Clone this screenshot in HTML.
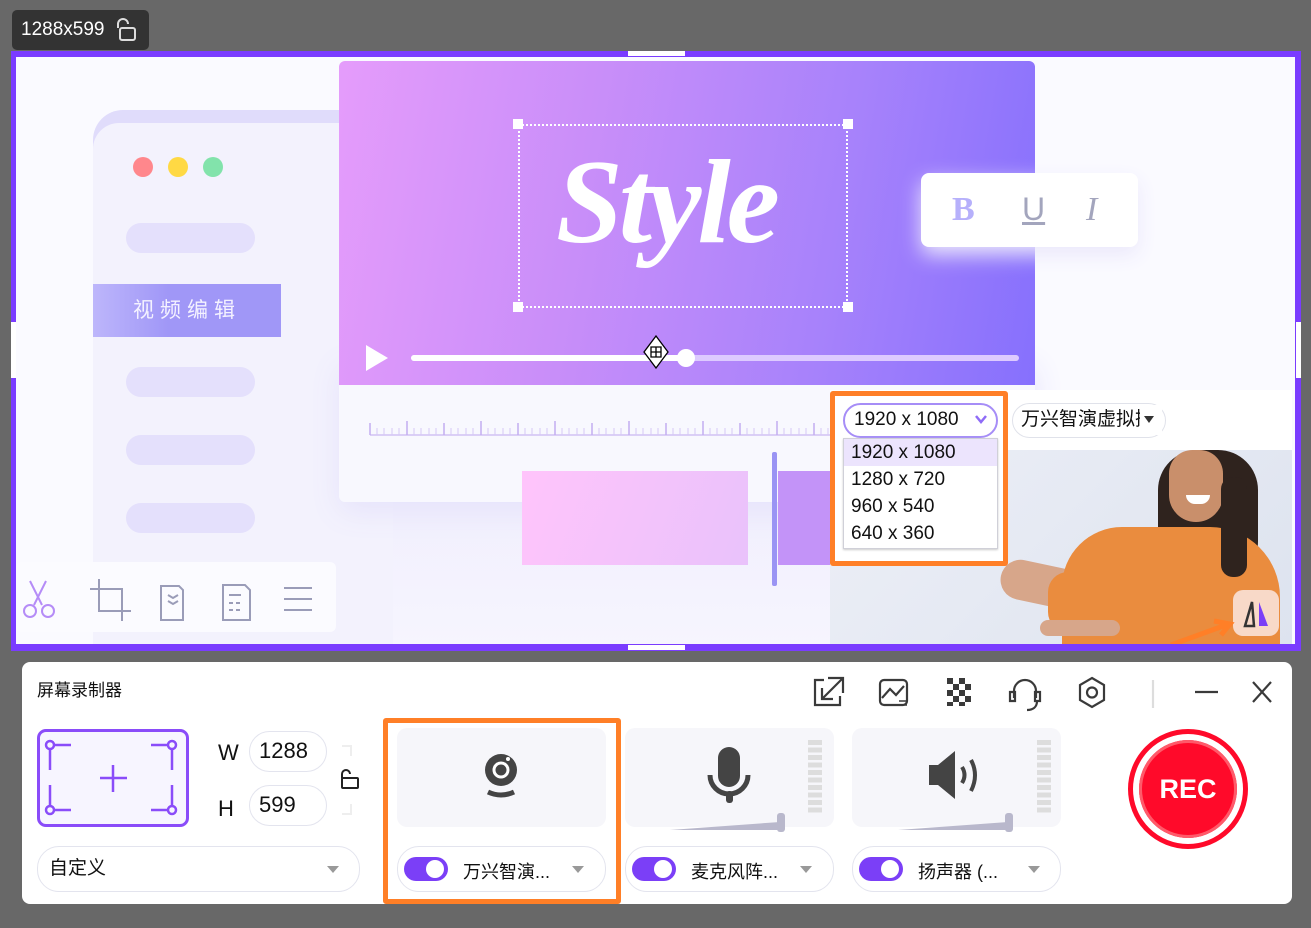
<!DOCTYPE html>
<html><head><meta charset="utf-8"><style>
*{margin:0;padding:0;box-sizing:border-box}
body{width:1311px;height:928px;background:#686868;position:relative;overflow:hidden;font-family:"Liberation Sans","Noto Sans CJK SC",sans-serif}
.a{position:absolute}
.pill{position:absolute;left:126px;width:129px;height:30px;border-radius:15px;background:#e4e0fc}
.sel{position:absolute;background:#fff;border:1.5px solid #e3e4ee;border-radius:22px}
.card{position:absolute;background:#f6f6fa;border-radius:10px}
.tog{position:absolute;width:44px;height:24px;border-radius:12px;background:#7b3ff7}
.tog:after{content:"";position:absolute;right:4px;top:3px;width:18px;height:18px;border-radius:50%;background:#fff}
.tri{position:absolute;width:0;height:0;border-left:6px solid transparent;border-right:6px solid transparent;border-top:7px solid #999}
</style></head><body>

<div class="a" style="left:12px;top:10px;width:137px;height:40px;background:#333;border-radius:5px;color:#fff;font-size:19px;line-height:40px;padding-left:9px">1288x599</div>
<svg class="a" style="left:113px;top:17px" width="26" height="26" viewBox="0 0 26 26"><path d="M5 11 V7 a5 5 0 0 1 10 0" fill="none" stroke="#ddd" stroke-width="2"/><rect x="7" y="11" width="15" height="12" rx="2" fill="none" stroke="#ddd" stroke-width="2"/></svg>

<div class="a" style="left:11px;top:51px;width:1290px;height:600px;background:#7a3cff"></div>
<div class="a" style="left:16px;top:57px;width:1279px;height:587px;background:#fafaff;overflow:hidden">
  <div class="a" style="left:323px;top:440px;width:500px;height:150px;background:linear-gradient(#f1effd,#f6f5fe)"></div>
  <div class="a" style="left:77px;top:53px;width:300px;height:560px;border-radius:30px 0 0 0;background:#e0dcfb"></div>
  <div class="a" style="left:77px;top:66px;width:300px;height:560px;border-radius:26px 0 0 0;background:#f3f2fd"></div>
  <div class="a" style="left:117px;top:100px;width:20px;height:20px;border-radius:50%;background:#ff878c"></div>
  <div class="a" style="left:152px;top:100px;width:20px;height:20px;border-radius:50%;background:#ffd944"></div>
  <div class="a" style="left:187px;top:100px;width:20px;height:20px;border-radius:50%;background:#82e3ab"></div>
  <div class="pill" style="left:110px;top:166px"></div>
  <div class="a" style="left:77px;top:227px;width:188px;height:53px;background:linear-gradient(90deg,#bdb6fb,#a097f7 40%);color:#f4f2ff;font-size:21px;line-height:53px;text-align:center;letter-spacing:6px">视频编辑</div>
  <div class="pill" style="left:110px;top:310px"></div>
  <div class="pill" style="left:110px;top:378px"></div>
  <div class="pill" style="left:110px;top:446px"></div>
  <div class="a" style="left:323px;top:300px;width:696px;height:145px;background:#f8f8fe;border-radius:0 0 6px 6px;box-shadow:0 10px 30px #e6e3fb"></div>
  <svg class="a" style="left:350px;top:360px" width="470" height="20">
  <line x1="4" y1="18" x2="470" y2="18" stroke="#c9b6f2" stroke-width="1.3"/>
  <path d="M4 18v-12M41 18v-14M78 18v-12M115 18v-14M152 18v-12M189 18v-14M226 18v-12M263 18v-14M300 18v-12M337 18v-14M374 18v-12M411 18v-14M448 18v-12" stroke="#c3aef0" stroke-width="1.5"/>
  <path d="M11 18v-7M18 18v-7M26 18v-7M33 18v-7M48 18v-7M55 18v-7M63 18v-7M70 18v-7M85 18v-7M92 18v-7M100 18v-7M107 18v-7M122 18v-7M129 18v-7M137 18v-7M144 18v-7M159 18v-7M166 18v-7M174 18v-7M181 18v-7M196 18v-7M203 18v-7M211 18v-7M218 18v-7M233 18v-7M240 18v-7M248 18v-7M255 18v-7M270 18v-7M277 18v-7M285 18v-7M292 18v-7M307 18v-7M314 18v-7M322 18v-7M329 18v-7M344 18v-7M351 18v-7M359 18v-7M366 18v-7M381 18v-7M388 18v-7M396 18v-7M403 18v-7M418 18v-7M425 18v-7M433 18v-7M440 18v-7M455 18v-7M462 18v-7" stroke="#d6c8f5" stroke-width="1"/></svg>
  <div class="a" style="left:506px;top:414px;width:226px;height:94px;background:linear-gradient(110deg,#ffc4fb,#e9c2fb);"></div>
  <div class="a" style="left:756px;top:395px;width:5px;height:134px;background:#9a94f4;border-radius:2px"></div>
  <div class="a" style="left:762px;top:414px;width:60px;height:94px;background:#c393f8"></div>
  <div class="a" style="left:323px;top:4px;width:696px;height:324px;border-radius:6px 6px 0 0;background:linear-gradient(100deg,#e59cfb 0%,#c98ef9 35%,#a782fb 70%,#8670fd 100%)"></div>
  <div class="a" style="left:502px;top:67px;width:330px;height:184px;border:2px dotted #fff"></div>
  <div class="a" style="left:497px;top:62px;width:10px;height:10px;background:#fff"></div>
  <div class="a" style="left:827px;top:62px;width:10px;height:10px;background:#fff"></div>
  <div class="a" style="left:497px;top:245px;width:10px;height:10px;background:#fff"></div>
  <div class="a" style="left:827px;top:245px;width:10px;height:10px;background:#fff"></div>
  <div class="a" style="left:540px;top:70px;color:#fff;font-family:'Liberation Serif',serif;font-style:italic;font-weight:bold;font-size:120px;line-height:150px;letter-spacing:-4px">Style</div>
  <div class="a" style="left:350px;top:288px;width:0;height:0;border-top:13px solid transparent;border-bottom:13px solid transparent;border-left:22px solid #fff"></div>
  <div class="a" style="left:395px;top:298px;width:608px;height:6px;border-radius:3px;background:#ddcaff"></div>
  <div class="a" style="left:395px;top:298px;width:275px;height:6px;border-radius:3px;background:#fff"></div>
  <div class="a" style="left:661px;top:292px;width:18px;height:18px;border-radius:50%;background:#fff"></div>
  <svg class="a" style="left:625px;top:278px" width="30" height="34"><path d="M15 1 L27 17 L15 33 L3 17 Z" fill="#fff" stroke="#000" stroke-width="1.3"/><path d="M10 12h10v10h-10zM15 12v10M10 17h10" fill="none" stroke="#000" stroke-width="1.3"/></svg>
  <div class="a" style="left:905px;top:116px;width:217px;height:74px;background:#fff;border-radius:8px;box-shadow:0 8px 20px #ebe8fb"></div>
  <div class="a" style="left:936px;top:134px;font-size:34px;font-weight:bold;color:#b6b0fb;font-family:'Liberation Serif',serif">B</div>
  <div class="a" style="left:1006px;top:134px;font-size:32px;color:#a3a5bd;text-decoration:underline">U</div>
  <div class="a" style="left:1070px;top:134px;font-size:34px;color:#a3a5bd;font-style:italic;font-family:'Liberation Serif',serif">I</div>
  <div class="a" style="left:0;top:505px;width:320px;height:70px;background:#fbfbff;border-radius:6px"></div>
  <svg class="a" style="left:6px;top:520px" width="300" height="45" fill="none" stroke-width="2">
   <g stroke="#b58cf7"><path d="M8 4 L20 28 M24 4 L12 28"/><circle cx="8" cy="34" r="6"/><circle cx="26" cy="34" r="6"/></g>
   <g stroke="#9a9cb8"><path d="M77 2v32h32M68 12h32v32"/><path d="M139 9h18l4 4v30h-22z"/><path d="M146 18l5 3 5-3M146 24l5 3 5-3"/><path d="M201 8h22l5 5v30h-27z M207 18h12M207 26h4M214 26h4M207 33h4M214 33h4"/><path d="M262 11h28M262 22h28M262 33h28"/></g>
  </svg>
  <!-- webcam region -->
  <div class="a" style="left:814px;top:333px;width:462px;height:254px;background:linear-gradient(135deg,#eef0f7,#dde3ef)"></div>
  <div class="a" style="left:814px;top:333px;width:462px;height:60px;background:#fff"></div>
  <!-- person -->
  <div class="a" style="left:1142px;top:393px;width:100px;height:122px;background:#2f231e;border-radius:40px 40px 30px 20px"></div>
  <div class="a" style="left:984px;top:508px;width:90px;height:40px;background:#d7a68a;border-radius:20px;transform:rotate(12deg)"></div>
  <div class="a" style="left:1046px;top:470px;width:218px;height:130px;background:#ea8c3e;border-radius:60px 70px 0 0"></div>
  <div class="a" style="left:1032px;top:515px;width:60px;height:60px;background:#ea8c3e;border-radius:20px"></div>
  <div class="a" style="left:1153px;top:393px;width:54px;height:72px;background:#c98f6b;border-radius:26px 26px 30px 30px"></div>
  <div class="a" style="left:1170px;top:438px;width:24px;height:9px;background:#fff;border-radius:0 0 12px 12px"></div>
  <div class="a" style="left:1205px;top:420px;width:26px;height:100px;background:#2f231e;border-radius:12px"></div>
  <div class="a" style="left:1024px;top:563px;width:80px;height:16px;background:#d7a68a;border-radius:8px"></div>
  <div class="a" style="left:1217px;top:533px;width:46px;height:46px;background:rgba(250,230,225,.85);border-radius:10px"></div>
  <svg class="a" style="left:1224px;top:540px" width="34" height="34"><path d="M12 5 L5 29 H14 Z" fill="none" stroke="#333" stroke-width="2.5"/><path d="M19 5 L28 29 H19 Z" fill="#7b3ff7"/></svg>
  <svg class="a" style="left:1150px;top:560px" width="80" height="30"><path d="M5 28 L60 8 M48 4 L64 7 L55 18" stroke="#ff7f27" stroke-width="5" fill="none"/></svg>
</div>
<div class="a" style="left:628px;top:51px;width:57px;height:5px;background:#fff"></div>
<div class="a" style="left:628px;top:645px;width:57px;height:5px;background:#fff"></div>
<div class="a" style="left:11px;top:322px;width:5px;height:56px;background:#fff"></div>
<div class="a" style="left:1296px;top:322px;width:5px;height:56px;background:#fff"></div>

<div class="a" style="left:830px;top:391px;width:178px;height:175px;border:5px solid #ff7f27;border-radius:3px;background:#fff"></div>
<div class="a" style="left:843px;top:403px;width:155px;height:35px;border:2.5px solid #a68df7;border-radius:18px;font-size:19px;line-height:30px;padding-left:9px;color:#111">1920 x 1080</div>
<svg class="a" style="left:975px;top:414px" width="12" height="10"><path d="M1 2 L6 8 L11 2" stroke="#8f6cf7" stroke-width="2.5" fill="none"/></svg>
<div class="a" style="left:843px;top:438px;width:155px;height:111px;border:1px solid #d0d0d8;background:#fff;font-size:19px;color:#111;box-shadow:0 1px 2px #ccc">
 <div style="height:27px;line-height:27px;padding-left:7px;background:#ece4fd">1920 x 1080</div>
 <div style="height:27px;line-height:27px;padding-left:7px">1280 x 720</div>
 <div style="height:27px;line-height:27px;padding-left:7px">960 x 540</div>
 <div style="height:27px;line-height:27px;padding-left:7px">640 x 360</div>
</div>
<div class="a" style="left:1012px;top:403px;width:154px;height:35px;border:1.5px solid #e0e2ea;border-radius:18px;font-size:19px;line-height:32px;padding-left:8px;color:#111;overflow:hidden;white-space:nowrap">万兴智演虚拟摄</div>
<div class="a" style="left:1140px;top:405px;width:22px;height:30px;background:#fff"></div>
<svg class="a" style="left:1143px;top:415px" width="12" height="10"><path d="M1 1 L6 8 L11 1 Z" fill="#333"/></svg>

<div class="a" style="left:22px;top:662px;width:1270px;height:242px;background:#fff;border-radius:8px"></div>
<div class="a" style="left:37px;top:676px;font-size:17px;color:#111">屏幕录制器</div>
<svg class="a" style="left:805px;top:672px" width="480" height="40" fill="none" stroke="#3a3a3a" stroke-width="2.2">
 <path d="M19 8 H10 V33 H35 V24 M23 6 H38 V21 M37 7 L18 26 M17 16 V27 H28"/>
 <rect x="75" y="8" width="27" height="25" rx="4"/><path d="M77 26 L85 17 L91 23 L99 14"/><path d="M94 29 h8 M94 33 h8" stroke-width="1.6"/>
 <g fill="#3a3a3a" stroke="none"><rect x="142" y="6" width="6" height="6"/><rect x="154" y="6" width="6" height="6"/><rect x="148" y="12" width="6" height="6"/><rect x="160" y="12" width="6" height="6"/><rect x="142" y="18" width="6" height="6"/><rect x="154" y="18" width="6" height="6"/><rect x="148" y="24" width="6" height="6"/><rect x="160" y="24" width="6" height="6"/><rect x="142" y="30" width="6" height="4"/><rect x="154" y="30" width="6" height="4"/></g>
 <path d="M209 26 V19 a11 11 0 0 1 22 0 V26 M205 20 h5 v9 h-5 z M230 20 h5 v9 h-5 z M232 29 c0 6 -4 9 -10 9"/>
 <path d="M287 6 L299 13 V28 L287 35 L275 28 V13 Z"/><circle cx="287" cy="20.5" r="5"/>
 <path d="M348 8 V36" stroke="#ddd"/>
 <path d="M390 20 H413"/><path d="M448 10 L466 30 M466 10 L448 30"/>
</svg>
<div class="a" style="left:37px;top:729px;width:152px;height:98px;border:3px solid #8a4cf9;border-radius:9px;background:#f7f5ff"></div>
<svg class="a" style="left:40px;top:732px" width="146" height="92" fill="none" stroke="#8a4cf9" stroke-width="2.5">
 <circle cx="10" cy="13" r="4"/><path d="M10 17 V38 M14 13 H31"/>
 <circle cx="132" cy="13" r="4"/><path d="M132 17 V38 M128 13 H111"/>
 <circle cx="10" cy="78" r="4"/><path d="M10 74 V53 M14 78 H31"/>
 <circle cx="132" cy="78" r="4"/><path d="M132 74 V53 M128 78 H111"/>
 <path d="M73 33 V60 M60 46 H87"/>
</svg>
<div class="a" style="left:218px;top:740px;font-size:22px;color:#111">W</div>
<div class="a" style="left:218px;top:796px;font-size:22px;color:#111">H</div>
<div class="sel" style="left:249px;top:731px;width:78px;height:41px;font-size:22px;line-height:38px;padding-left:9px;color:#111">1288</div>
<div class="sel" style="left:249px;top:785px;width:78px;height:41px;font-size:22px;line-height:38px;padding-left:9px;color:#111">599</div>
<svg class="a" style="left:335px;top:744px" width="30" height="72" fill="none"><path d="M7 2 h9 v10 M16 60 v10 h-9" stroke="#eee" stroke-width="2"/><path d="M7 34 V30 a4 4 0 0 1 8 0" stroke="#222" stroke-width="2"/><rect x="7" y="34" width="16" height="10" rx="1" stroke="#222" stroke-width="2"/></svg>
<div class="sel" style="left:37px;top:846px;width:323px;height:46px;font-size:19px;line-height:43px;padding-left:11px;color:#111">自定义</div>
<div class="tri" style="left:327px;top:866px"></div>

<div class="a" style="left:383px;top:718px;width:238px;height:186px;border:5px solid #ff7f27;border-radius:3px"></div>
<div class="card" style="left:397px;top:728px;width:209px;height:99px"></div>
<svg class="a" style="left:478px;top:748px" width="46" height="56"><circle cx="23" cy="22" r="16" fill="#444"/><circle cx="23" cy="22" r="7" fill="none" stroke="#fff" stroke-width="3"/><circle cx="30" cy="11" r="2" fill="#fff"/><path d="M10 44 Q23 50 36 44" stroke="#444" stroke-width="5" fill="none"/></svg>
<div class="sel" style="left:397px;top:846px;width:209px;height:46px"></div>
<div class="tog" style="left:404px;top:857px"></div>
<div class="a" style="left:463px;top:858px;font-size:18px;color:#111">万兴智演...</div>
<div class="tri" style="left:572px;top:866px"></div>

<div class="card" style="left:625px;top:728px;width:209px;height:99px"></div>
<svg class="a" style="left:700px;top:745px" width="60" height="80"><rect x="18" y="2" width="22" height="40" rx="11" fill="#444"/><path d="M10 30 a19 19 0 0 0 38 0" stroke="#444" stroke-width="5" fill="none"/><rect x="26" y="46" width="7" height="12" rx="3" fill="#444"/></svg>
<div class="a" style="left:808px;top:740px;width:14px;height:73px;background:repeating-linear-gradient(#ddd 0 5px,transparent 5px 7.5px)"></div>
<svg class="a" style="left:660px;top:810px" width="130" height="24"><path d="M10 20 L120 12 V20 Z" fill="#b9b8cc"/><rect x="117" y="3" width="8" height="19" rx="3" fill="#b9b8cc"/></svg>
<div class="sel" style="left:625px;top:846px;width:209px;height:46px"></div>
<div class="tog" style="left:632px;top:857px"></div>
<div class="a" style="left:691px;top:858px;font-size:18px;color:#111">麦克风阵...</div>
<div class="tri" style="left:800px;top:866px"></div>

<div class="card" style="left:852px;top:728px;width:209px;height:99px"></div>
<svg class="a" style="left:925px;top:748px" width="60" height="56"><path d="M4 17 H13 L30 3 V51 L13 37 H4 Z" fill="#444"/><path d="M37 19 Q42 27 37 35" stroke="#444" stroke-width="4" fill="none"/><path d="M46 12 Q54 27 46 43" stroke="#444" stroke-width="4" fill="none"/></svg>
<div class="a" style="left:1037px;top:740px;width:14px;height:73px;background:repeating-linear-gradient(#ddd 0 5px,transparent 5px 7.5px)"></div>
<svg class="a" style="left:888px;top:810px" width="130" height="24"><path d="M10 20 L120 12 V20 Z" fill="#b9b8cc"/><rect x="117" y="3" width="8" height="19" rx="3" fill="#b9b8cc"/></svg>
<div class="sel" style="left:852px;top:846px;width:209px;height:46px"></div>
<div class="tog" style="left:859px;top:857px"></div>
<div class="a" style="left:918px;top:858px;font-size:18px;color:#111">扬声器 (...</div>
<div class="tri" style="left:1028px;top:866px"></div>

<div class="a" style="left:1128px;top:729px;width:120px;height:120px;border-radius:50%;border:5px solid #ff0a2a;background:#fff"></div>
<div class="a" style="left:1139px;top:740px;width:98px;height:98px;border-radius:50%;background:#ff0a2a;box-shadow:inset 0 0 0 3px #ff5a6a;color:#fff;font-weight:bold;font-size:27px;line-height:98px;text-align:center">REC</div>
</body></html>
